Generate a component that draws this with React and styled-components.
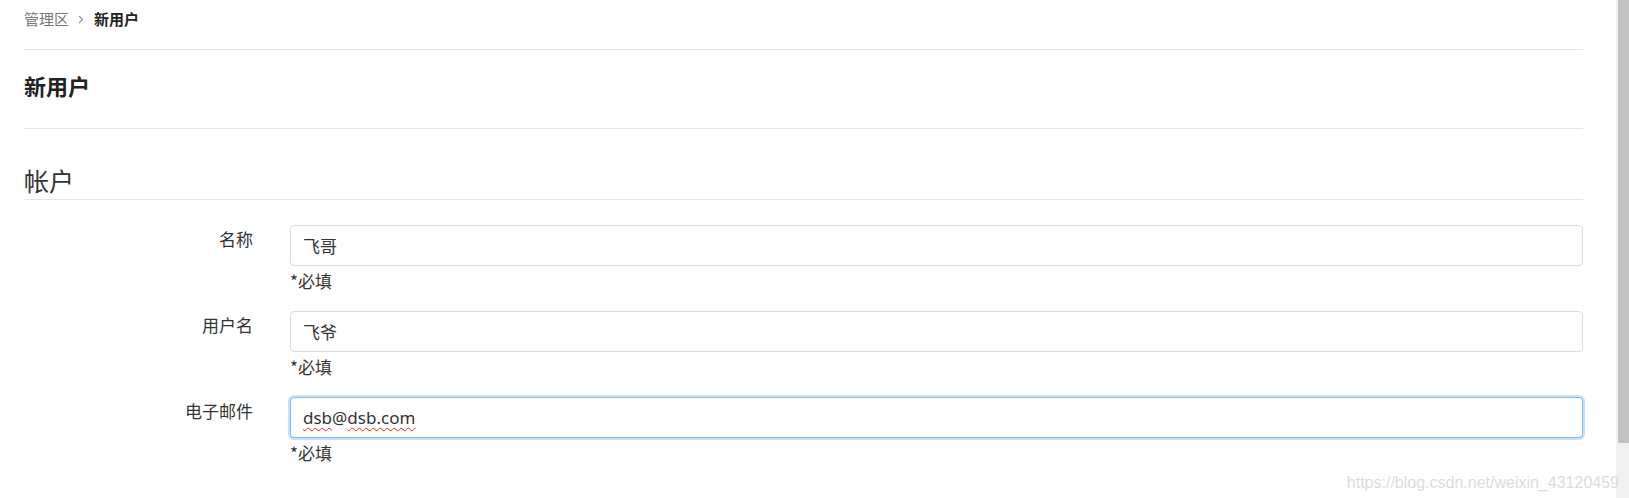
import React from "react";
import styled, { createGlobalStyle } from "styled-components";

const GlobalStyle = createGlobalStyle`
  html, body { margin: 0; padding: 0; background: #fff; }
  body {
    font-family: "Noto Sans", "Noto Sans CJK SC", sans-serif;
    color: #333;
  }
  * { box-sizing: border-box; }
`;

const Page = styled.div`
  position: relative;
  display: flex;
  width: 100%;
  height: 100vh;
  overflow: hidden;
`;

const Main = styled.main`
  flex: 1;
  min-width: 0;
  padding: 0 33px 0 24px;
`;

const ScrollTrack = styled.div`
  width: 13px;
  flex: none;
  background: #f0f0f0;
  padding-left: 2px;
`;

const ScrollThumb = styled.div`
  height: 443px;
  background: #c1c1c1;
`;

const Breadcrumb = styled.nav`
  display: flex;
  align-items: flex-start;
  height: 50px;
  padding: 9px 0 0;
  border-bottom: 1px solid #e5e5e5;
  font-family: "Noto Sans CJK SC", sans-serif;
  font-size: 15px;
  line-height: 20px;
`;

const Crumb = styled.span`
  color: ${(p) => (p.$active ? "#222" : "#777")};
  font-weight: ${(p) => (p.$active ? 700 : 400)};
`;

const Sep = styled.svg`
  width: 6px;
  height: 20px;
  margin: 0 10px 0 9px;
`;

const PageHeader = styled.header`
  padding: 21px 0 29px;
  border-bottom: 1px solid #e5e5e5;
`;

const Title = styled.h1`
  margin: 0;
  font-family: "Noto Sans CJK SC", sans-serif;
  font-size: 22px;
  line-height: 28px;
  font-weight: 700;
  color: #222;
`;

const Fieldset = styled.fieldset`
  margin: 35px 0 0;
  padding: 0;
  border: 0;
`;

const Legend = styled.legend`
  display: block;
  width: 100%;
  padding: 0 0 3px;
  margin: 0 0 25px;
  border-bottom: 1px solid #e5e5e5;
  font-family: "Noto Sans CJK SC", sans-serif;
  font-size: 25px;
  line-height: 32px;
  font-weight: 400;
  color: #333;
`;

const Row = styled.div`
  display: grid;
  grid-template-columns: 229px 1fr;
  column-gap: 37px;
  margin-bottom: 18px;
`;

const Label = styled.label`
  padding-top: 2px;
  text-align: right;
  font-family: "Noto Sans CJK SC", sans-serif;
  font-size: 17px;
  line-height: 24px;
  color: #333;
`;

const Control = styled.div`
  display: flex;
  flex-direction: column;
`;

const Input = styled.input`
  display: block;
  width: 100%;
  height: 41px;
  padding: 0 12px;
  border: 1px solid #dcdcdc;
  border-radius: 4px;
  background: #fff;
  font-family: "Noto Sans", "Noto Sans CJK SC", sans-serif;
  font-size: 17px;
  color: #333;
  outline: none;
`;

const FakeInput = styled.div`
  display: flex;
  align-items: center;
  width: 100%;
  height: 41px;
  padding: 0 12px;
  border: 1px solid #80bbf7;
  border-radius: 4px;
  box-shadow: 0 0 0 2px #c6e0fd;
  background: #fff;
  font-family: "Noto Sans", "Noto Sans CJK SC", sans-serif;
  font-size: 17px;
  color: #333;
  white-space: pre;
`;

const Misspelled = styled.span`
  text-decoration: underline wavy #e0201b;
  text-decoration-thickness: 1px;
  text-underline-offset: 3px;
`;

const Help = styled.span`
  margin-top: 3px;
  font-family: "Noto Sans CJK SC", sans-serif;
  font-size: 17px;
  line-height: 24px;
  color: #333;
`;

const Watermark = styled.div`
  position: absolute;
  right: 10px;
  bottom: 6px;
  font-family: "Liberation Sans", Arial, sans-serif;
  font-size: 16px;
  color: #dcdcdc;
  pointer-events: none;
`;

function Field({ label, value, children }) {
  return (
    <Row>
      <Label>{label}</Label>
      <Control>
        {children || <Input readOnly value={value} />}
        <Help>*必填</Help>
      </Control>
    </Row>
  );
}

export default function App() {
  return (
    <>
      <GlobalStyle />
      <Page>
        <Main>
          <Breadcrumb>
            <Crumb>管理区</Crumb>
            <Sep viewBox="0 0 6 20">
              <path d="M1 7 L4.5 10.5 L1 14" fill="none" stroke="#999" strokeWidth="1.3" />
            </Sep>
            <Crumb $active>新用户</Crumb>
          </Breadcrumb>
          <PageHeader>
            <Title>新用户</Title>
          </PageHeader>
          <Fieldset>
            <Legend>帐户</Legend>
            <Field label="名称" value="飞哥" />
            <Field label="用户名" value="飞爷" />
            <Field label="电子邮件">
              <FakeInput role="textbox">
                <Misspelled>dsb</Misspelled>@<Misspelled>dsb.com</Misspelled>
              </FakeInput>
            </Field>
          </Fieldset>
        </Main>
        <ScrollTrack>
          <ScrollThumb />
        </ScrollTrack>
        <Watermark>https://blog.csdn.net/weixin_43120459</Watermark>
      </Page>
    </>
  );
}
